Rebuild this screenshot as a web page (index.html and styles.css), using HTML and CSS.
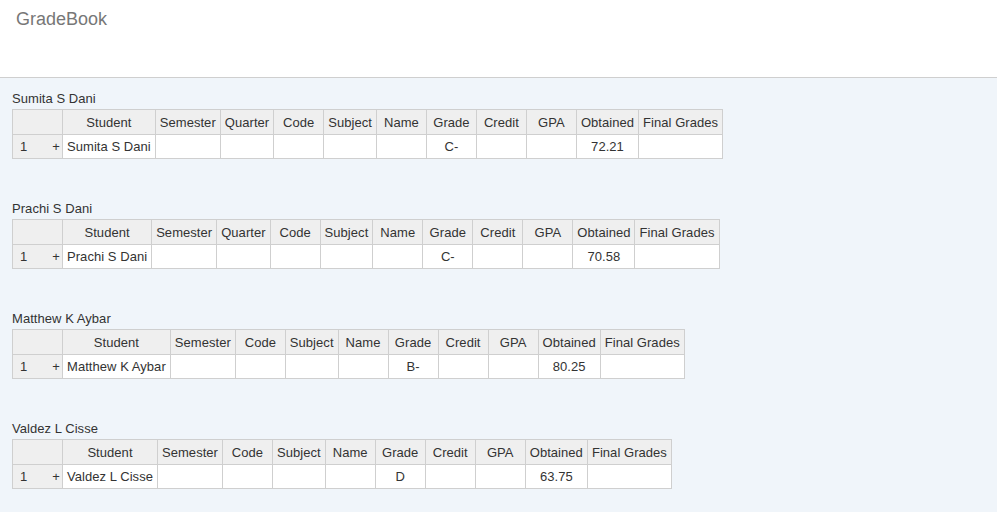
FILE: index.html
```html
<!DOCTYPE html>
<html>
<head>
<meta charset="utf-8">
<title>GradeBook</title>
<link rel="stylesheet" href="styles.css">
</head>
<body>
<header class="topbar">
  <div class="brand">GradeBook</div>
</header>
<main class="content">
  <section class="block">
    <div class="block-title">Sumita S Dani</div>
    <table class="grid">
      <thead>
        <tr><th></th><th>Student</th><th>Semester</th><th>Quarter</th><th>Code</th><th>Subject</th><th>Name</th><th>Grade</th><th>Credit</th><th>GPA</th><th>Obtained</th><th>Final Grades</th></tr>
      </thead>
      <tbody>
        <tr><td class="rownum"><span>1</span><span>+</span></td><td class="left">Sumita S Dani</td><td></td><td></td><td></td><td></td><td></td><td>C-</td><td></td><td></td><td>72.21</td><td></td></tr>
      </tbody>
    </table>
  </section>
  <section class="block">
    <div class="block-title">Prachi S Dani</div>
    <table class="grid">
      <thead>
        <tr><th></th><th>Student</th><th>Semester</th><th>Quarter</th><th>Code</th><th>Subject</th><th>Name</th><th>Grade</th><th>Credit</th><th>GPA</th><th>Obtained</th><th>Final Grades</th></tr>
      </thead>
      <tbody>
        <tr><td class="rownum"><span>1</span><span>+</span></td><td class="left">Prachi S Dani</td><td></td><td></td><td></td><td></td><td></td><td>C-</td><td></td><td></td><td>70.58</td><td></td></tr>
      </tbody>
    </table>
  </section>
  <section class="block">
    <div class="block-title">Matthew K Aybar</div>
    <table class="grid">
      <thead>
        <tr><th></th><th>Student</th><th>Semester</th><th>Code</th><th>Subject</th><th>Name</th><th>Grade</th><th>Credit</th><th>GPA</th><th>Obtained</th><th>Final Grades</th></tr>
      </thead>
      <tbody>
        <tr><td class="rownum"><span>1</span><span>+</span></td><td class="left">Matthew K Aybar</td><td></td><td></td><td></td><td></td><td>B-</td><td></td><td></td><td>80.25</td><td></td></tr>
      </tbody>
    </table>
  </section>
  <section class="block">
    <div class="block-title">Valdez L Cisse</div>
    <table class="grid">
      <thead>
        <tr><th></th><th>Student</th><th>Semester</th><th>Code</th><th>Subject</th><th>Name</th><th>Grade</th><th>Credit</th><th>GPA</th><th>Obtained</th><th>Final Grades</th></tr>
      </thead>
      <tbody>
        <tr><td class="rownum"><span>1</span><span>+</span></td><td class="left">Valdez L Cisse</td><td></td><td></td><td></td><td></td><td>D</td><td></td><td></td><td>63.75</td><td></td></tr>
      </tbody>
    </table>
  </section>
</main>
</body>
</html>
```
FILE: styles.css
```css
html, body {
  margin: 0;
  padding: 0;
}
body {
  font-family: "Liberation Sans", Arial, sans-serif;
  font-size: 13px;
  color: #333;
  background: #f0f5fa;
  min-height: 512px;
}
.topbar {
  background: #fff;
  height: 77px;
  border-bottom: 1px solid #cfcfcf;
  box-sizing: content-box;
  padding: 0;
}
.brand {
  font-size: 18px;
  color: #777;
  padding: 9px 16px 0;
  line-height: 21px;
}
.content {
  padding: 13px 12px 0;
  display: flex;
  flex-direction: column;
  gap: 42px;
}
.block-title {
  line-height: 15px;
  margin-bottom: 3px;
  color: #333;
  letter-spacing: 0.05px;
}
.grid {
  border-collapse: separate;
  border-spacing: 0;
  border-top: 1px solid #cfcfcf;
  border-left: 1px solid #cfcfcf;
  font-size: 13px;
  line-height: 15px;
}
.grid th,
.grid td {
  border-right: 1px solid #cfcfcf;
  border-bottom: 1px solid #cfcfcf;
  padding: 0 4px;
  width: 41px;
  white-space: nowrap;
  text-align: center;
  vertical-align: middle;
  color: #333;
  letter-spacing: 0.05px;
}
.grid th {
  background: #efefef;
  font-weight: normal;
  height: 24px;
}
.grid td {
  background: #fff;
  height: 23px;
}
.grid td.left {
  text-align: left;
  width: auto;
}
.grid td.rownum {
  background: #efefef;
  padding: 0;
  width: 49px;
}
.rownum span:first-child {
  float: left;
  padding-left: 7px;
}
.rownum span:last-child {
  float: right;
  padding-right: 2px;
}
```
